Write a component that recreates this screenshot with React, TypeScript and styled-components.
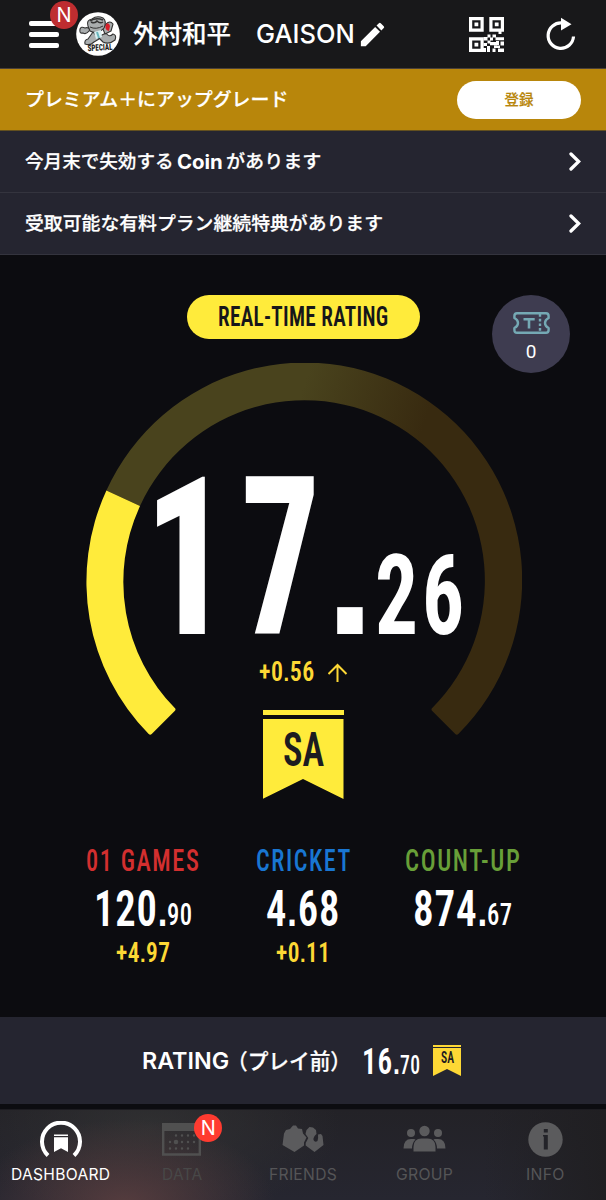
import React, { useLayoutEffect, useRef, useState } from 'react';
import styled, { createGlobalStyle } from 'styled-components';
import { MdEdit } from 'react-icons/md';

const SANS = 'Inter, "Noto Sans CJK JP", sans-serif';
const DIN = '"Roboto Condensed", Roboto, sans-serif';
const SQUARE = '"Liberation Sans", sans-serif';

const GlobalStyle = createGlobalStyle`
  * { box-sizing: border-box; }
  body { margin: 0; background: #0c0c10; color: #fff; font-family: ${SANS}; }
  svg { display: block; flex: none; }
`;

/* ---------- text set to an exact width, for condensed lettering ---------- */
const FitBox = styled.span<{ $w: number; $h: number }>`
  display: block;
  flex: none;
  width: ${p => p.$w}px;
  height: ${p => p.$h}px;
`;
const FitInner = styled.span<{ $size: number; $h: number; $font: string; $weight: number; $color: string; $spacing: number; $stroke: number }>`
  display: inline-block;
  white-space: pre;
  transform-origin: 0 50%;
  font: ${p => p.$weight} ${p => p.$size}px/${p => p.$h}px ${p => p.$font};
  letter-spacing: ${p => p.$spacing}px;
  margin-right: ${p => -p.$spacing}px;
  color: ${p => p.$color};
  -webkit-text-stroke: ${p => p.$stroke}px ${p => p.$color};
  vertical-align: top;
`;
const Point = styled.span`
  font-family: ${SQUARE};
  font-weight: 700;
  font-size: 0.85em;
  line-height: 0;
`;
type FitProps = { children: string; w: number; h: number; size: number; font?: string; weight?: number; color?: string; spacing?: number; stroke?: number };
function Fit({ children, w, h, size, font = DIN, weight = 600, color = '#fff', spacing = 0, stroke = 0 }: FitProps) {
  const ref = useRef<HTMLSpanElement>(null);
  const [scale, setScale] = useState(1);
  useLayoutEffect(() => {
    const measure = () => {
      if (ref.current) setScale(w / (ref.current.offsetWidth - spacing));
    };
    measure();
    document.fonts?.ready.then(measure);
  }, [w, spacing, children]);
  const drop = font === SANS ? 0 : size * 0.014;
  const [whole, part] = children.split('.');
  return (
    <FitBox $w={w} $h={h}>
      <FitInner ref={ref} $size={size} $h={h} $font={font} $weight={weight} $color={color} $spacing={spacing} $stroke={stroke} style={{ transform: `translateY(${drop}px) scaleX(${scale})` }}>
        {part === undefined || font !== DIN ? children : <>{whole}<Point>.</Point>{part}</>}
      </FitInner>
    </FitBox>
  );
}

/* ---------- header ---------- */
const Page = styled.div`
  width: 606px;
  height: 1200px;
  display: flex;
  flex-direction: column;
  overflow: hidden;
  background: #0c0c10;
`;
const Header = styled.header`
  height: 69px;
  flex: none;
  display: flex;
  align-items: center;
  padding: 0 30px 0 29px;
  background: #18181a;
  border-bottom: 1px solid #4a4038;
`;
const MenuButton = styled.div`
  position: relative;
  width: 47px;
  height: 34px;
  display: flex;
  flex-direction: column;
  justify-content: center;
  gap: 6px;
`;
const MenuBar = styled.i`
  width: 30px;
  height: 5px;
  border-radius: 2px;
  background: #fff;
`;
const NewBadge = styled.span<{ $left: number; $top: number; $color: string }>`
  position: absolute;
  left: ${p => p.$left}px;
  top: ${p => p.$top}px;
  width: 28px;
  height: 28px;
  border-radius: 50%;
  background: ${p => p.$color};
  color: #fff;
  font: 400 20px/28px ${SANS};
  text-align: center;
`;
const Names = styled.div`
  display: flex;
  align-items: center;
  gap: 25px;
  margin-left: 13px;
  flex: 1;
`;
const HeaderIcons = styled.div`
  display: flex;
  align-items: center;
  gap: 42px;
`;
const Pencil = styled(MdEdit)`
  width: 31px;
  height: 31px;
  margin-left: -23px;
`;

/* ---------- notices ---------- */
const Premium = styled.div`
  height: 62px;
  flex: none;
  display: flex;
  align-items: center;
  justify-content: space-between;
  padding: 0 25px;
  background: #b8860b;
  border-bottom: 1px solid #63501f;
`;
const JoinButton = styled.div`
  width: 124px;
  height: 38px;
  border-radius: 19px;
  background: #fff;
  display: flex;
  align-items: center;
  justify-content: center;
`;
const Notice = styled.div`
  height: 62px;
  flex: none;
  display: flex;
  align-items: center;
  justify-content: space-between;
  padding: 0 25px;
  background: #252530;
  border-bottom: 1px solid #34343e;
`;
const NoticeText = styled.div`
  display: flex;
  gap: 3px;
`;

/* ---------- rating ---------- */
const Main = styled.main`
  position: relative;
  height: 762px;
  flex: none;
  display: flex;
  flex-direction: column;
  align-items: center;
  padding-top: 40px;
`;
const Pill = styled.div`
  width: 233px;
  height: 44px;
  border-radius: 22px;
  background: #ffeb3b;
  display: flex;
  align-items: center;
  justify-content: center;
`;
const Ticket = styled.div`
  position: absolute;
  left: 492px;
  top: 40px;
  width: 78px;
  height: 78px;
  border-radius: 50%;
  background: #3e3c50;
  display: flex;
  flex-direction: column;
  align-items: center;
  padding-top: 17px;
`;
const TicketCount = styled.span`
  font: 400 19px/20px Roboto, sans-serif;
  margin-top: 8px;
`;
const Dial = styled.div`
  display: grid;
  justify-items: center;
  height: 436px;
  margin-top: 24px;
  & > * { grid-area: 1 / 1; }
`;
const Readout = styled.div`
  display: flex;
  flex-direction: column;
  align-items: center;
  padding-top: 114px;
`;
const BigNumber = styled.div`
  display: flex;
  align-items: flex-end;
  width: 320px;
  margin-left: 2px;
`;
const Gap = styled.i<{ $w: number }>`
  flex: none;
  width: ${p => p.$w}px;
`;
const DeltaRow = styled.div`
  display: flex;
  align-items: center;
  gap: 14px;
  height: 24px;
  margin: 26px 0;
`;
const Flag = styled.div<{ $w: number; $stripe: number; $space: number; $body: number; $color: string }>`
  flex: none;
  width: ${p => p.$w}px;
  border-top: ${p => p.$stripe}px solid ${p => p.$color};
  padding-top: ${p => p.$space}px;
  & > div {
    height: ${p => p.$body}px;
    background: ${p => p.$color};
    clip-path: polygon(0 0, 100% 0, 100% 100%, 50% 75%, 0 100%);
    display: flex;
    justify-content: center;
    padding-top: ${p => p.$body * 0.15}px;
  }
`;

/* ---------- statistics ---------- */
const Stats = styled.div`
  width: 100%;
  display: grid;
  grid-template-columns: 160px 160px 160px;
  justify-content: center;
  margin-top: 51px;
  padding-right: 1px;
`;
const Stat = styled.div`
  display: flex;
  flex-direction: column;
  align-items: center;
`;
const StatValue = styled.div`
  display: flex;
  align-items: flex-end;
  margin: 19px 0 18px;
`;

/* ---------- previous rating ---------- */
const Previous = styled.section`
  height: 87px;
  flex: none;
  display: flex;
  align-items: center;
  background: #252530;
  padding-left: 142px;
`;
const PreviousLabel = styled.div`
  display: flex;
  & > :last-child { margin-left: -2px; }
`;
const PreviousValue = styled.div`
  display: flex;
  align-items: flex-end;
  margin: 0 13px 0 11px;
`;

/* ---------- tab bar ---------- */
const TabBar = styled.nav`
  height: 91px;
  flex: none;
  margin-top: 5px;
  display: grid;
  grid-template-columns: repeat(5, 121.2px);
  border-top: 1px solid #1c1b20;
  background:
    radial-gradient(ellipse 150px 85px at 125px 105%, #5c3f40dd, #5a3c3d00),
    radial-gradient(ellipse 190px 90px at 150px 20%, #363636aa, #34343400),
    linear-gradient(90deg, #23232900 80%, #201f22 100%),
    linear-gradient(#232227, #262630);
`;
const Tab = styled.div`
  position: relative;
  display: flex;
  flex-direction: column;
  align-items: center;
  padding-top: 8px;
`;
const TabIcon = styled.div`
  height: 42px;
  display: flex;
  align-items: center;
  margin-bottom: 8px;
`;

const Avatar = () => (
  <svg width="44" height="44" viewBox="0 0 44 44">
    <circle cx="22" cy="22" r="21.8" fill="#fff" />
    <g fill="#a9adae" stroke="#333" strokeWidth="1.1" strokeLinejoin="round">
      <path d="M17 20 L12 27 Q8 28 9 32 Q14 34 18 30 L23 27Z" />
      <path d="M22 25 L27 30 Q33 33 39 28 Q41 23 37 22 Q33 26 30 21Z" />
      <path d="M13 19 Q10 23 7 21 Q3 22 4 17 Q5 14 9 16 Q12 15 14 17Z" />
      <path d="M27 17 L30 12 Q34 8 37 12 L35 19 L29 22Z" />
      <path d="M12 14 Q10 8 16 7 Q21 3 27 6 Q31 9 28 16 Q22 23 14 19Z" />
    </g>
    <path d="M14 9 Q20 5 27 8 M15 10 Q19 12 21 9 Q24 12 27 10" stroke="#333" strokeWidth="1.5" fill="none" />
    <path d="M14 15 Q20 18 27 14" stroke="#333" strokeWidth="1" fill="none" />
    <path d="M18 20 L20 27 L26 25 L25 18Z" fill="#d9eef0" />
    <path d="M21 20 L23 26" stroke="#69b5bb" strokeWidth="2" />
    <path d="M30 12 Q33 10 34 14 L33 19 Q28 18 30 12Z" fill="#d6202a" />
    <text x="24" y="38.5" textAnchor="middle" fontFamily={DIN} fontWeight="800" fontSize="9" fill="#1c1c1c" textLength="25" lengthAdjust="spacingAndGlyphs" transform="rotate(-3 24 36)">SPECIAL</text>
  </svg>
);

const QrIcon = () => (
  <svg width="35" height="35" viewBox="0 0 35 35" fill="none" stroke="#fff" strokeWidth="3.2">
    <path d="M1.600 1.600h11.500v11.500H1.600zM21.900 1.600h11.500v11.500H21.900zM1.600 21.900h11.500v11.500H1.600z" />
    <path fill="#fff" stroke="none" d="M5.500 5.500h3.800v3.800H5.500zM25.800 5.500h3.800v3.800H25.800zM5.500 25.800h3.800v3.800H5.500zM14.500 20h4v3.500h-4zM18.500 17.500h3v3h-3zM21 20.500h3v3h-3zM23.500 17.500h3.500v3h-3.500zM29.500 14h3v3h-3zM26.500 20.300h8.500v3H26.500zM18.500 23.500h3v3h-3zM21 25h7v3.300h-7zM14.500 26h3.500v3h-3.500zM27 24h3v4h-3zM18 29h3v6h-3zM14 31h3v4h-3zM23.500 31.500h3v3.500h-3zM31.500 24.500h3.500v4h-3.500zM25 28.500h6v2.500h-6zM29 31.500h6v3.500H29z" />
  </svg>
);

const ReloadIcon = () => (
  <svg width="30" height="34" viewBox="0 0 30 34">
    <path d="M16 6 A12.700 12.700 0 1 0 27.500 19.500" fill="none" stroke="#fff" strokeWidth="3.200" />
    <path d="M15 0.800v12.800l10.500-6.400z" fill="#fff" />
  </svg>
);

const Chevron = () => (
  <svg width="12" height="20" viewBox="0 0 12 20">
    <path d="M2 2 9.700 9.500 2 17" fill="none" stroke="#fff" strokeWidth="3.300" strokeLinecap="round" />
  </svg>
);

const TicketIcon = () => (
  <svg width="37" height="22" viewBox="0 0 37 22" fill="none" stroke="#75a9b4" strokeWidth="2.400">
    <path d="M4 1.300h29Q35.600 1.300 35.600 4V6q-3.600 1.800-3.600 5t3.600 5v2q0 2.700-2.600 2.700H4Q1.400 20.700 1.400 18v-2Q5 14.200 5 11T1.400 6V4Q1.400 1.300 4 1.300Z" strokeLinejoin="round" />
    <path d="M10.500 7.300h11.200M16 7.300v9.200" strokeWidth="2.600" />
    <path d="M27 2v19" strokeDasharray="2.700 2" />
  </svg>
);

const Gauge = () => (
  <svg width="438" height="373" viewBox="-2 -1 438 373">
    <defs>
      <linearGradient id="track" gradientUnits="userSpaceOnUse" x1="215" y1="30" x2="335" y2="70">
        <stop offset="0" stopColor="#49431d" />
        <stop offset="1" stopColor="#382a10" />
      </linearGradient>
    </defs>
    <path d="M20.400 126.600 A217.500 217.500 0 1 1 372.300 370 Q370.800 371.500 369.300 370 L346.300 347 Q344.800 345.500 346 344.300 A180.500 180.500 0 1 0 54 142.100Z" fill="url(#track)" />
    <path d="M20.400 126.600 A217.500 217.500 0 0 0 62.700 370 Q64.200 371.500 65.700 370 L88.700 347 Q90.200 345.500 89 344.300 A180.500 180.500 0 0 1 54 142.100Z" fill="#ffeb3b" />
  </svg>
);

const DashIcon = () => (
  <svg width="42" height="36" viewBox="0 0 42 36">
    <path d="M8 34.500 A19 19 0 1 1 34 34.500" fill="none" stroke="#fff" strokeWidth="4" />
    <path d="M14 13.500h14v1.500H14zM14 16.300h14V31l-7-3.700L14 31z" fill="#fff" />
  </svg>
);
const DataIcon = () => (
  <svg width="39" height="33" viewBox="0 0 39 33">
    <path d="M1.200 1.500h36.600v30H1.200z" fill="none" stroke="#505050" strokeWidth="2.400" />
    <path d="M0 0h39v8H0z" fill="#505050" />
    <path d="M14 12.500h20M8 19h26M8 25.500h20" stroke="#505050" strokeWidth="2.400" strokeDasharray="0 6" strokeLinecap="round" />
    <circle cx="14" cy="19" r="2.300" fill="#505050" />
  </svg>
);
const FriendsIcon = () => (
  <svg width="42" height="30" viewBox="0 0 42 30" fill="#5b5b5d">
    <path d="M2 9.500 4 6 8 5 11 1.500 14 1.500 16 4.500 20 5 21 9.500 24.500 13.500 22 18.500 22 21.500 12.500 28 0.500 21Z" />
    <path d="M23.500 10 24.500 6 27.500 3 31 3.500 34 6 34.500 10 Q31 13 31.500 16 33 19 35.500 17 36.500 15 36 10.500 L39 10 40.500 12 41.500 21 32.500 28 23.700 21.500 23.700 19 26.300 14Z" />
  </svg>
);
const GroupIcon = () => (
  <svg width="43" height="28" viewBox="0 0 43 28" fill="#5b5b5d">
    <circle cx="21.500" cy="6" r="5.200" />
    <circle cx="8" cy="8" r="4" />
    <circle cx="35" cy="8" r="4" />
    <path d="M10.500 26.500V22q0-8.500 8-8.500h6q8 0 8 8.500v4.500z" />
    <path d="M0.500 23.500q0-9.500 7.500-9.500h3q1 0 1.500.4Q9 17.500 9 23.500zM42.500 23.500q0-9.500-7.500-9.500h-3q-1 0-1.500.4Q34 17.500 34 23.500z" />
  </svg>
);
const InfoIcon = () => (
  <svg width="35" height="35" viewBox="0 0 35 35">
    <circle cx="17.500" cy="17.500" r="17.200" fill="#5b5b5d" />
    <path d="M15.800 7h4v3.500h-4zM15 13h4.800v14.500h-4V14.500H15z" fill="#232329" />
  </svg>
);

const stats = [
  { label: '01 GAMES', lw: 113, color: '#d32f2f', whole: '120.', ww: 73, part: '90', delta: '+4.97', dw: 54 },
  { label: 'CRICKET', lw: 94, color: '#1976d2', whole: '4.68', ww: 73, part: '', delta: '+0.11', dw: 54 },
  { label: 'COUNT-UP', lw: 115, color: '#689f38', whole: '874.', ww: 74, part: '67', delta: '', dw: 0 },
];

const tabs = [
  { label: 'DASHBOARD', w: 99, color: '#fff', icon: <DashIcon /> },
  { label: 'DATA', w: 40, color: '#484848', icon: <DataIcon />, fresh: true },
  { label: 'FRIENDS', w: 68, color: '#555557', icon: <FriendsIcon /> },
  { label: 'GROUP', w: 57, color: '#555557', icon: <GroupIcon /> },
  { label: 'INFO', w: 38, color: '#555557', icon: <InfoIcon /> },
];

export default function App() {
  return (
    <Page>
      <GlobalStyle />
      <Header>
        <MenuButton>
          <MenuBar /><MenuBar /><MenuBar />
          <NewBadge $left={21} $top={-16} $color="#be2d30">N</NewBadge>
        </MenuButton>
        <Avatar />
        <Names>
          <Fit w={98} h={32} size={24.5} font={SANS} weight={500} stroke={0.2}>外村和平</Fit>
          <Fit w={99} h={32} size={26} font={SANS} weight={500}>GAISON</Fit>
          <Pencil />
        </Names>
        <HeaderIcons>
          <QrIcon />
          <ReloadIcon />
        </HeaderIcons>
      </Header>
      <Premium>
        <Fit w={263} h={28} size={18.7} font={SANS} weight={500} stroke={0.25}>プレミアム＋にアップグレード</Fit>
        <JoinButton>
          <Fit w={29} h={20} size={14.5} font={SANS} weight={500} stroke={0.2} color="#b8860b">登録</Fit>
        </JoinButton>
      </Premium>
      <Notice>
        <NoticeText>
          <Fit w={149} h={28} size={18.7} font={SANS} weight={500} stroke={0.25}>今月末で失効する</Fit>
          <Fit w={46} h={28} size={19.5} font={SANS} weight={650}>Coin</Fit>
          <Fit w={95} h={28} size={18.7} font={SANS} weight={500} stroke={0.25}>があります</Fit>
        </NoticeText>
        <Chevron />
      </Notice>
      <Notice>
        <Fit w={358} h={28} size={18.7} font={SANS} weight={500} stroke={0.25}>受取可能な有料プラン継続特典があります</Fit>
        <Chevron />
      </Notice>
      <Main>
        <Pill>
          <Fit w={170} h={20} size={27.5} weight={600} color="#16161a" spacing={0.4}>REAL-TIME RATING</Fit>
        </Pill>
        <Ticket>
          <TicketIcon />
          <TicketCount>0</TicketCount>
        </Ticket>
        <Dial>
          <Gauge />
          <Readout>
            <BigNumber>
              <Fit w={86} h={157} size={221} weight={800}>1</Fit>
              <Gap $w={11} />
              <Fit w={79} h={157} size={221} weight={800}>7</Fit>
              <Gap $w={5} />
              <Fit w={50} h={130} size={180} font={SQUARE} weight={700}>.</Fit>
              <Fit w={43} h={79} size={111} weight={700}>2</Fit>
              <Gap $w={4} />
              <Fit w={42} h={79} size={111} weight={700}>6</Fit>
            </BigNumber>
            <DeltaRow>
              <Fit w={55} h={19} size={27} color="#fdd835" spacing={0.6}>+0.56</Fit>
              <svg width="20" height="20" viewBox="0 0 20 20" fill="none" stroke="#fdd835" strokeWidth="2">
                <path d="M9.500 21V3M0.500 12 9.500 3l9 9" />
              </svg>
            </DeltaRow>
            <Flag $w={81} $stripe={5} $space={4} $body={80} $color="#ffeb3b">
              <div><Fit w={41} h={35} size={49} color="#1c1c20">SA</Fit></div>
            </Flag>
          </Readout>
        </Dial>
        <Stats>
          {stats.map(s => (
            <Stat key={s.label}>
              <Fit w={s.lw} h={22} size={31} weight={500} color={s.color} spacing={2}>{s.label}</Fit>
              <StatValue>
                <Fit w={s.ww} h={35} size={49.5} spacing={1}>{s.whole}</Fit>
                {s.part && <Fit w={25} h={22} size={31} weight={500} spacing={0.5}>{s.part}</Fit>}
              </StatValue>
              {s.delta && <Fit w={s.dw} h={19} size={27} weight={600} color="#fdd835" spacing={0.6}>{s.delta}</Fit>}
            </Stat>
          ))}
        </Stats>
      </Main>
      <Previous>
        <PreviousLabel>
          <Fit w={87} h={30} size={22.5} font={SANS} weight={600}>RATING</Fit>
          <Fit w={124} h={30} size={21.5} font={SANS} weight={500} stroke={0.25}>（プレイ前）</Fit>
        </PreviousLabel>
        <PreviousValue>
          <Fit w={38} h={26} size={36} spacing={1}>16.</Fit>
          <Fit w={20} h={18} size={26} weight={500} spacing={0.5}>70</Fit>
        </PreviousValue>
        <Flag $w={28} $stripe={2} $space={1} $body={28} $color="#fdd835">
          <div><Fit w={13} h={12} size={16} weight={600} color="#1c1c20">SA</Fit></div>
        </Flag>
      </Previous>
      <TabBar>
        {tabs.map(t => (
          <Tab key={t.label}>
            <TabIcon>{t.icon}</TabIcon>
            <Fit w={t.w} h={13} size={16.5} font={SANS} weight={400} color={t.color} spacing={0.3}>{t.label}</Fit>
            {t.fresh && <NewBadge $left={73} $top={4} $color="#ff3b30">N</NewBadge>}
          </Tab>
        ))}
      </TabBar>
    </Page>
  );
}
